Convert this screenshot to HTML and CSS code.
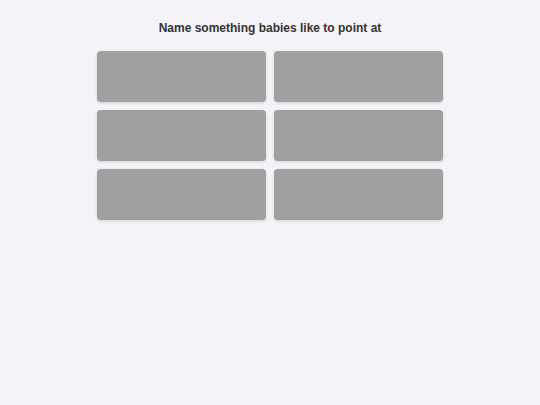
FILE: index.html
```html
<!DOCTYPE html>
<html lang="en">
  <head>
    <meta charset="UTF-8" />
    <meta name="viewport" content="width=device-width, initial-scale=1.0" />
    <title>Survey board</title>
    <link rel="stylesheet" href="styles.css">
  </head>
  <body>
    <div class="board">
      <h1 class="question">Name something babies like to point at</h1>
      <ul class="answers">
        <li class="answer"></li>
        <li class="answer"></li>
        <li class="answer"></li>
        <li class="answer"></li>
        <li class="answer"></li>
        <li class="answer"></li>
      </ul>
    </div>
  </body>
</html>
```

FILE: styles.css
```css
* {
  margin: 0;
  padding: 0;
  list-style: none;
  box-sizing: border-box;
}
html,
body {
  width: 100%;
  height: 100%;
  background-color: #f3f3f8;
  font-family: 'Liberation Sans', Arial, sans-serif;
}
.board {
  width: 346px;
  margin: 0 auto;
  padding-top: 21px;
}
.question {
  font-size: 12px;
  line-height: 15px;
  font-weight: bold;
  text-align: center;
  color: #333;
}
.answers {
  margin-top: 15px;
  display: grid;
  grid-template-columns: 1fr 1fr;
  gap: 8px;
}
/* hidden answer tiles */
.answer {
  height: 51px;
  border-radius: 4px;
  background-color: #a0a0a0;
  box-shadow: 0 1px 3px rgba(0, 0, 0, 0.15);
}
```
